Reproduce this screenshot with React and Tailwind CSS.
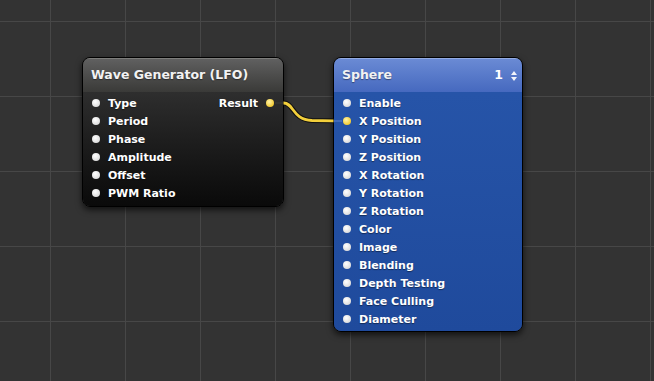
const font = "font-['DejaVu_Sans',sans-serif]";

const Dot = ({ on }) => (
  <span
    className={
      "block w-[8px] h-[8px] rounded-full shrink-0 " +
      (on
        ? "bg-[radial-gradient(circle_at_40%_35%,#fff3a8,#f2cb34_70%)]"
        : "bg-[radial-gradient(circle_at_40%_35%,#ffffff,#dcdcdc_75%)]")
    }
  />
);

const Port = ({ label, on, right }) => (
  <div
    className={
      "h-[18px] flex items-center gap-[8px] " +
      (right ? "flex-row-reverse pr-[9px]" : "pl-[9px]")
    }
  >
    <Dot on={on} />
    <span className="text-[11px] font-bold text-white leading-none [text-shadow:0_1px_1px_rgba(0,0,0,0.45)]">
      {label}
    </span>
  </div>
);

const Stepper = () => (
  <div className="flex items-center gap-[8px]">
    <span className="text-[12.5px] font-bold text-white">1</span>
    <svg width="6" height="10" viewBox="0 0 6 10">
      <path d="M3 0 L6 4 L0 4 Z M3 10 L6 6 L0 6 Z" fill="#f2f4fa" />
    </svg>
  </div>
);

const Node = ({ title, pos, size, blue, inputs, outputs = [], extra }) => (
  <div
    className={
      "absolute rounded-[8px] border border-black overflow-hidden flex flex-col shadow-[0_3px_6px_rgba(0,0,0,0.65)] " +
      pos +
      " " +
      size
    }
  >
    <div
      className={
        "h-[34px] shrink-0 flex items-center justify-between pl-[8px] pr-[5px] border-t " +
        (blue
          ? "bg-linear-to-b from-[#6a8ad4] to-[#4669bf] border-[#93abe2]"
          : "bg-linear-to-b from-[#606060] to-[#3a3a38] border-[#7d7d7b]")
      }
    >
      <span className="text-[12.5px] font-bold text-[#f2f2f2] [text-shadow:0_1px_1px_rgba(0,0,0,0.4)]">
        {title}
      </span>
      {extra}
    </div>
    <div
      className={
        "flex-1 flex justify-between pt-[2px] " +
        (blue
          ? "bg-linear-to-b from-[#2654a8] to-[#1f4a9c]"
          : "bg-linear-to-b from-[#2e2e2e] to-[#0a0a0a]")
      }
    >
      <div className="flex flex-col">
        {inputs.map((p) => (
          <Port key={p.label} label={p.label} on={p.on} />
        ))}
      </div>
      <div className="flex flex-col">
        {outputs.map((p) => (
          <Port key={p.label} label={p.label} on={p.on} right />
        ))}
      </div>
    </div>
  </div>
);

export default function App() {
  const wave = ["Type", "Period", "Phase", "Amplitude", "Offset", "PWM Ratio"].map((l) => ({ label: l }));
  const sphere = [
    "Enable",
    "X Position",
    "Y Position",
    "Z Position",
    "X Rotation",
    "Y Rotation",
    "Z Rotation",
    "Color",
    "Image",
    "Blending",
    "Depth Testing",
    "Face Culling",
    "Diameter",
  ].map((l) => ({ label: l, on: l === "X Position" }));

  return (
    <div
      className={
        "relative w-[654px] h-[381px] overflow-hidden bg-[#333333] bg-[linear-gradient(to_right,#474747_1px,transparent_1px),linear-gradient(to_bottom,#474747_1px,transparent_1px)] bg-[size:75px_75px] bg-[position:50px_21px] " +
        font
      }
    >
      <Node
        title="Wave Generator (LFO)"
        pos="left-[82px] top-[57px]"
        size="w-[202px] h-[150px]"
        inputs={wave}
        outputs={[{ label: "Result", on: true }]}
      />
      <Node
        title="Sphere"
        pos="left-[333px] top-[57px]"
        size="w-[190px] h-[275px]"
        blue
        inputs={sphere}
        extra={<Stepper />}
      />
      <svg className="absolute inset-0 pointer-events-none" width="654" height="381">
        <path d="M275 103 L283 103" stroke="#3a3a38" strokeWidth="1" />
        <path d="M334 121 L342 121" stroke="#5d82cf" strokeWidth="1" />
        <path
          d="M283.5 103 C294 103, 292 119.5, 312 120.5 L333.5 120.8"
          fill="none"
          stroke="#111"
          strokeWidth="5"
        />
        <path
          d="M283.5 103 C294 103, 292 119.5, 312 120.5 L333.5 120.8"
          fill="none"
          stroke="#f3cf3b"
          strokeWidth="2.8"
        />
      </svg>
    </div>
  );
}
